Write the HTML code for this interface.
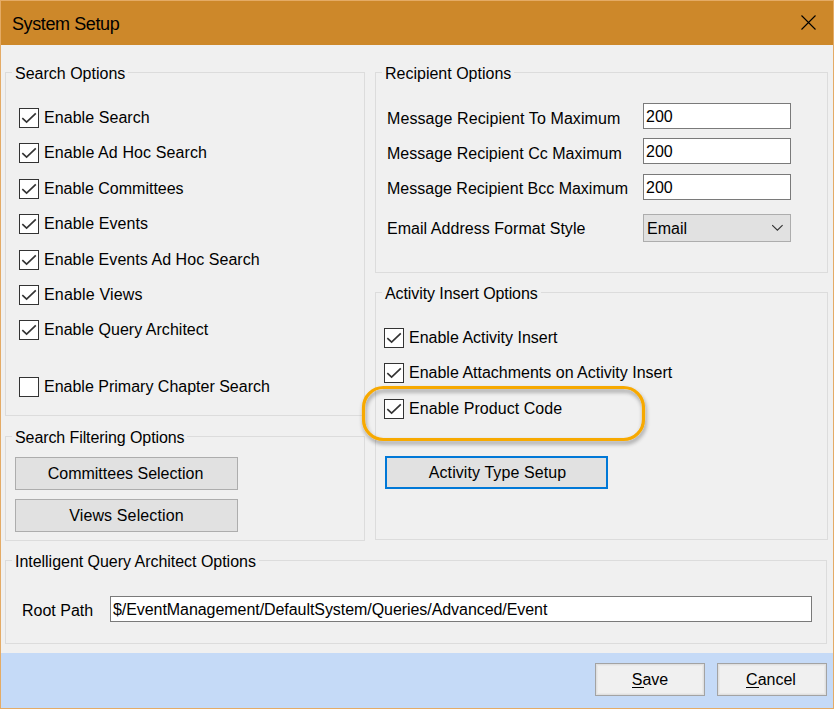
<!DOCTYPE html>
<html><head><meta charset="utf-8">
<style>
*{margin:0;padding:0;box-sizing:border-box}
html,body{width:834px;height:709px;overflow:hidden;background:#f0f0f0}
body{position:relative;font-family:"Liberation Sans",sans-serif;font-size:16px;color:#000}
.a{position:absolute}
.t{position:absolute;white-space:nowrap;line-height:18px;height:18px}
#win{position:absolute;left:0;top:0;width:834px;height:709px;border:1px solid #e4ab66;background:#f0f0f0}
#title{position:absolute;left:0;top:0;width:834px;height:45px;background:#cd882a;border:1px solid #e4ab66;border-bottom:none}
#footer{position:absolute;left:0;top:653px;width:834px;height:56px;background:#c5daf7;border:1px solid #e4ab66;border-top:none}
.gb{position:absolute;border:1px solid #dcdcdc}
.cap{position:absolute;background:#f0f0f0;padding:0 3px 0 3px}
.cb{position:absolute;width:20px;height:20px;border:1px solid #333;background:#fff}
.cb svg{position:absolute;left:0;top:0}
.tb{position:absolute;border:1px solid #7a7a7a;background:#fff}
.btn{position:absolute;border:1px solid #adadad;background:#e1e1e1;text-align:center}
.fbtn{position:absolute;border:1px solid #a3a3a3;background:#f0f0f0;box-shadow:inset 0 0 0 1px #e0e0e0,inset 0 0 0 2px #e9e9e9;text-align:center}
</style></head><body>
<div id="win"></div>
<div id="title"></div>
<div class="t" style="left:12px;top:14px;font-size:18px;letter-spacing:-0.4px;line-height:20px;height:20px">System Setup</div>
<svg class="a" style="left:800px;top:14px" width="18" height="18" viewBox="0 0 18 18"><path d="M1.5 1.5 L15.5 15.5 M15.5 1.5 L1.5 15.5" stroke="#000" stroke-width="1.1" fill="none"/></svg>

<!-- Search Options -->
<div class="gb" style="left:5px;top:72px;width:360px;height:344px"></div>
<div class="t cap" style="left:12px;top:65px">Search Options</div>

<div class="cb" style="left:19px;top:108px"><svg width="18" height="18"><path d="M2.3 9.2 L6.6 13.2 L15.8 4.4" stroke="#333" stroke-width="1.65" fill="none"/></svg></div>
<div class="t" style="left:44px;top:109px;letter-spacing:0.06px">Enable Search</div>
<div class="cb" style="left:19px;top:143px"><svg width="18" height="18"><path d="M2.3 9.2 L6.6 13.2 L15.8 4.4" stroke="#333" stroke-width="1.65" fill="none"/></svg></div>
<div class="t" style="left:44px;top:144px;letter-spacing:0.1px">Enable Ad Hoc Search</div>
<div class="cb" style="left:19px;top:179px"><svg width="18" height="18"><path d="M2.3 9.2 L6.6 13.2 L15.8 4.4" stroke="#333" stroke-width="1.65" fill="none"/></svg></div>
<div class="t" style="left:44px;top:180px">Enable Committees</div>
<div class="cb" style="left:19px;top:214px"><svg width="18" height="18"><path d="M2.3 9.2 L6.6 13.2 L15.8 4.4" stroke="#333" stroke-width="1.65" fill="none"/></svg></div>
<div class="t" style="left:44px;top:215px;letter-spacing:0.06px">Enable Events</div>
<div class="cb" style="left:19px;top:250px"><svg width="18" height="18"><path d="M2.3 9.2 L6.6 13.2 L15.8 4.4" stroke="#333" stroke-width="1.65" fill="none"/></svg></div>
<div class="t" style="left:44px;top:251px;letter-spacing:0.05px">Enable Events Ad Hoc Search</div>
<div class="cb" style="left:19px;top:285px"><svg width="18" height="18"><path d="M2.3 9.2 L6.6 13.2 L15.8 4.4" stroke="#333" stroke-width="1.65" fill="none"/></svg></div>
<div class="t" style="left:44px;top:286px;letter-spacing:0.16px">Enable Views</div>
<div class="cb" style="left:19px;top:320px"><svg width="18" height="18"><path d="M2.3 9.2 L6.6 13.2 L15.8 4.4" stroke="#333" stroke-width="1.65" fill="none"/></svg></div>
<div class="t" style="left:44px;top:321px;letter-spacing:0.03px">Enable Query Architect</div>
<div class="cb" style="left:19px;top:377px"></div>
<div class="t" style="left:44px;top:378px">Enable Primary Chapter Search</div>

<!-- Search Filtering Options -->
<div class="gb" style="left:5px;top:436px;width:360px;height:105px"></div>
<div class="t cap" style="left:12px;top:429px;letter-spacing:-0.09px">Search Filtering Options</div>
<div class="btn" style="left:15px;top:457px;width:223px;height:33px"><div class="t" style="left:-1px;width:221px;top:7px">Committees Selection</div></div>
<div class="btn" style="left:15px;top:499px;width:223px;height:33px"><div class="t" style="left:0;width:221px;top:7px;letter-spacing:0.13px">Views Selection</div></div>

<!-- Recipient Options -->
<div class="gb" style="left:375px;top:72px;width:453px;height:201px"></div>
<div class="t cap" style="left:382px;top:65px">Recipient Options</div>
<div class="t" style="left:387px;top:110px;letter-spacing:0.09px">Message Recipient To Maximum</div>
<div class="t" style="left:387px;top:145px;letter-spacing:0.035px">Message Recipient Cc Maximum</div>
<div class="t" style="left:387px;top:180px">Message Recipient Bcc Maximum</div>
<div class="t" style="left:387px;top:220px;letter-spacing:0.04px">Email Address Format Style</div>
<div class="tb" style="left:643px;top:103px;width:148px;height:26px"><div class="t" style="left:2px;top:4px">200</div></div>
<div class="tb" style="left:643px;top:138px;width:148px;height:26px"><div class="t" style="left:2px;top:4px">200</div></div>
<div class="tb" style="left:643px;top:174px;width:148px;height:26px"><div class="t" style="left:2px;top:4px">200</div></div>
<div class="btn" style="left:643px;top:214px;width:148px;height:28px;text-align:left"><div class="t" style="left:3px;top:5px">Email</div>
<svg class="a" style="left:128px;top:9px" width="14" height="9"><path d="M0.2 1.1 L5.4 6.1 L10.6 1.1" stroke="#333" stroke-width="1.15" fill="none"/></svg></div>

<!-- Activity Insert Options -->
<div class="gb" style="left:375px;top:292px;width:453px;height:248px"></div>
<div class="t cap" style="left:382px;top:285px;letter-spacing:-0.09px">Activity Insert Options</div>
<div class="cb" style="left:384px;top:328px"><svg width="18" height="18"><path d="M2.3 9.2 L6.6 13.2 L15.8 4.4" stroke="#333" stroke-width="1.65" fill="none"/></svg></div>
<div class="t" style="left:409px;top:329px">Enable Activity Insert</div>
<div class="cb" style="left:384px;top:363px"><svg width="18" height="18"><path d="M2.3 9.2 L6.6 13.2 L15.8 4.4" stroke="#333" stroke-width="1.65" fill="none"/></svg></div>
<div class="t" style="left:409px;top:364px">Enable Attachments on Activity Insert</div>
<div class="cb" style="left:384px;top:399px"><svg width="18" height="18"><path d="M2.3 9.2 L6.6 13.2 L15.8 4.4" stroke="#333" stroke-width="1.65" fill="none"/></svg></div>
<div class="t" style="left:409px;top:400px;letter-spacing:0.06px">Enable Product Code</div>
<div class="btn" style="left:385px;top:456px;width:223px;height:33px;border:2px solid #0078d7"><div class="t" style="left:1px;width:219px;top:6px;letter-spacing:0.09px">Activity Type Setup</div></div>

<!-- highlight -->
<svg class="a" style="left:355px;top:380px" width="300" height="75"><defs><filter id="sh" x="-10%" y="-30%" width="120%" height="160%"><feGaussianBlur in="SourceAlpha" stdDeviation="2"/><feOffset dx="1" dy="3"/><feComponentTransfer><feFuncA type="linear" slope="0.4"/></feComponentTransfer><feMerge><feMergeNode/><feMergeNode in="SourceGraphic"/></feMerge></filter></defs>
<rect x="8.5" y="7.5" width="280" height="52" rx="20" ry="20" fill="none" stroke="#f7a900" stroke-width="3.2" filter="url(#sh)"/></svg>

<!-- Intelligent Query Architect Options -->
<div class="gb" style="left:5px;top:560px;width:822px;height:84px"></div>
<div class="t cap" style="left:12px;top:553px;letter-spacing:-0.03px">Intelligent Query Architect Options</div>
<div class="t" style="left:22px;top:602px">Root Path</div>
<div class="tb" style="left:110px;top:596px;width:702px;height:26px"><div class="t" style="left:2px;top:4px;letter-spacing:-0.06px">$/EventManagement/DefaultSystem/Queries/Advanced/Event</div></div>

<div id="footer"></div>
<div class="fbtn" style="left:595px;top:663px;width:110px;height:33px"><div class="t" style="left:0;width:108px;top:7px">Save</div></div>
<div class="a" style="left:632px;top:687px;width:12px;height:1px;background:#000"></div>
<div class="fbtn" style="left:717px;top:663px;width:110px;height:33px"><div class="t" style="left:0;width:106px;top:7px">Cancel</div></div>
<div class="a" style="left:746px;top:687px;width:13px;height:1px;background:#000"></div>
</body></html>
